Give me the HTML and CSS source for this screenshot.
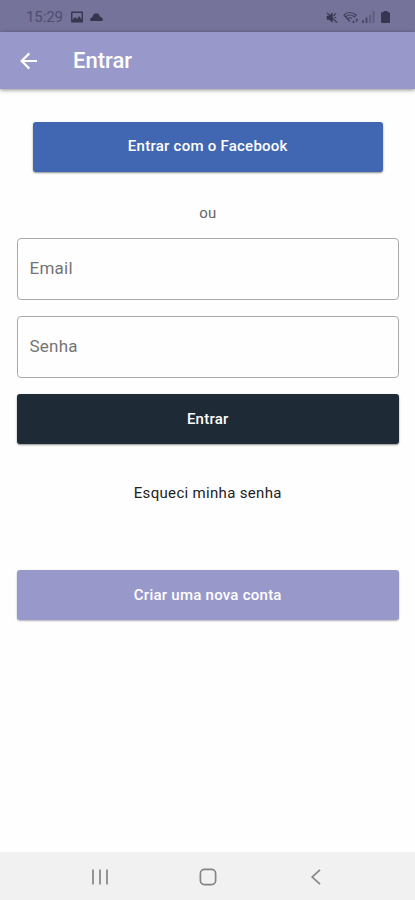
FILE: index.html
```html
<!DOCTYPE html>
<html lang="pt-BR">
<head>
<meta charset="utf-8">
<meta name="viewport" content="width=device-width, initial-scale=1">
<title>Entrar</title>
<link rel="stylesheet" href="styles.css">
</head>
<body>
<div class="screen">
  <div class="status">
    <span class="clock">15:29</span>
    <svg class="ic-photo" width="12" height="12" viewBox="0 0 12 12"><path fill="currentColor" fill-rule="evenodd" d="M1 .5h10q1 0 1 1v9q0 1-1 1H1q-1 0-1-1v-9q0-1 1-1zM1.500 2v7l2.500-3 2 2 2-3 2.600 3.500V2z"/></svg>
    <svg class="ic-cloud" width="13" height="8" viewBox="0 0 13 8"><path fill="currentColor" d="M1.500 8Q0 8 0 6.500q0-1.500 2.200-2.200Q3.300.3 6.300.3q2.500 0 3.700 3.200Q13 5 13 6.700 13 8 11.500 8z"/></svg>
    <span class="spacer"></span>
    <svg class="ic-mute" width="12" height="13" viewBox="0 0 13 13"><path fill="currentColor" d="M.8 4.500h2.400l4-3.800v11.600L3.500 9H.8z"/><path d="M1 1.500l11 10.500M8 5l2.500-3M9 6.500h2" fill="none" stroke="currentColor" stroke-width="1.300"/></svg>
    <svg class="ic-wifi" width="16" height="13" viewBox="0 0 16 13"><path d="M.8 4Q7 -1 13.200 4L11 6.300M.8 4L7 10.500M3 5.500q4-3 8 0M5 7.500q2-1.500 4 0" fill="none" stroke="currentColor" stroke-width="1.200"/><path d="M10.500 12V9.500M9.300 10.800l1.200 1.200 1.200-1.200M13.800 8v3M12.600 9.200L13.800 8 15 9.200" fill="none" stroke="currentColor" stroke-width="1"/></svg>
    <svg class="ic-signal" width="13" height="12" viewBox="0 0 13 12"><path fill="currentColor" d="M0 9h2v3H0zM3.500 6.500h2V12h-2z"/><path fill="currentColor" opacity=".5" d="M7 3.500h2V12H7zM10.500 0h2v12h-2z"/></svg>
    <svg class="ic-battery" width="9" height="12" viewBox="0 0 9 12"><path fill="currentColor" d="M2.500 0h4v1.200H8q1 0 1 1V11q0 1-1 1H1q-1 0-1-1V2.200q0-1 1-1h1.500z"/></svg>
  </div>
  <header class="appbar">
    <svg class="back" width="18" height="18" viewBox="0 0 18 18"><path d="M17 9H2M9.300 1.400L1.700 9l7.600 7.600" fill="none" stroke="currentColor" stroke-width="2.200"/></svg>
    <h1 class="title">Entrar</h1>
  </header>
  <main class="content">
    <button class="btn facebook" type="button"><span>Entrar com o Facebook</span></button>
    <p class="or"><span>ou</span></p>
    <div class="field"><span>Email</span></div>
    <div class="field"><span>Senha</span></div>
    <button class="btn login" type="button"><span>Entrar</span></button>
    <a class="forgot"><span>Esqueci minha senha</span></a>
    <button class="btn create" type="button"><span>Criar uma nova conta</span></button>
  </main>
  <nav class="navbar">
    <svg width="18" height="18" viewBox="0 0 18 18"><path d="M2 1.500v15M9 1.500v15M16 1.500v15" fill="none" stroke="currentColor" stroke-width="1.700"/></svg>
    <svg width="18" height="18" viewBox="0 0 18 18"><rect x="1.400" y="1.400" width="15.200" height="15.200" rx="4" fill="none" stroke="currentColor" stroke-width="1.700"/></svg>
    <svg width="18" height="18" viewBox="0 0 18 18"><path d="M13 1.800L5.200 9l7.800 7.200" fill="none" stroke="currentColor" stroke-width="1.700"/></svg>
  </nav>
</div>
</body>
</html>
```
FILE: styles.css
```css
* { box-sizing: border-box; }
body { margin: 0; font-family: Roboto, sans-serif; background: #fefefe; }
.screen { width: 415px; height: 900px; display: flex; flex-direction: column; overflow: hidden; }
svg { display: block; flex: none; }

.status { height: 32px; flex: none; background: #757399; color: #373650; display: flex; align-items: center; padding: 2px 25px 0 26px; }
.clock { font-size: 15px; letter-spacing: -0.1px; color: #4f4d70; line-height: 20px; width: 37px; margin-right: 8px; }
.ic-cloud { margin-left: 7px; }
.spacer { flex: 1; }
.ic-wifi { margin-left: 5px; opacity: .85; }
.ic-signal { margin-left: 3px; opacity: .65; }
.ic-battery { margin-left: 6px; }

.appbar { height: 57px; flex: none; background: #9998cb; color: #fff; display: flex; align-items: center; padding-left: 20px; box-shadow: 0 1px 4px rgba(0, 0, 0, .45); }
.title { margin: 0 0 0 35px; font-size: 22px; font-weight: 500; line-height: 26px; }

.content { flex: 1; display: flex; flex-direction: column; padding: 33px 16px 0 16.5px; }
.btn { display: flex; align-items: center; justify-content: center; height: 50px; border: 0; border-radius: 3px; padding: 0 0 1px; color: #fff; font: 500 15px/20px Roboto, sans-serif; letter-spacing: .25px; box-shadow: 0 1px 2px rgba(0, 0, 0, .45); }
.facebook { margin: 0 16px; background: #4267b2; padding-bottom: 2px; }
.or { margin: 31px 0 15px; text-align: center; font-size: 15px; line-height: 20px; color: #666; }
.field { height: 62px; border: 1px solid #aaa; border-radius: 4px; padding: 0 12px 2px; margin-bottom: 16px; display: flex; align-items: center; font-size: 17px; letter-spacing: .25px; color: #747474; }
.login { background: #1e2a35; }
.forgot { margin: 39px 0 67px; text-align: center; font-size: 15px; line-height: 20px; letter-spacing: .32px; color: #222; }
.create { background: #9998cb; box-shadow: 0 1px 2px rgba(0, 0, 0, .3); }

.navbar { height: 48px; flex: none; background: #f1f1f1; color: #858585; display: flex; justify-content: center; gap: 90px; align-items: center; padding-top: 1px; }
```
